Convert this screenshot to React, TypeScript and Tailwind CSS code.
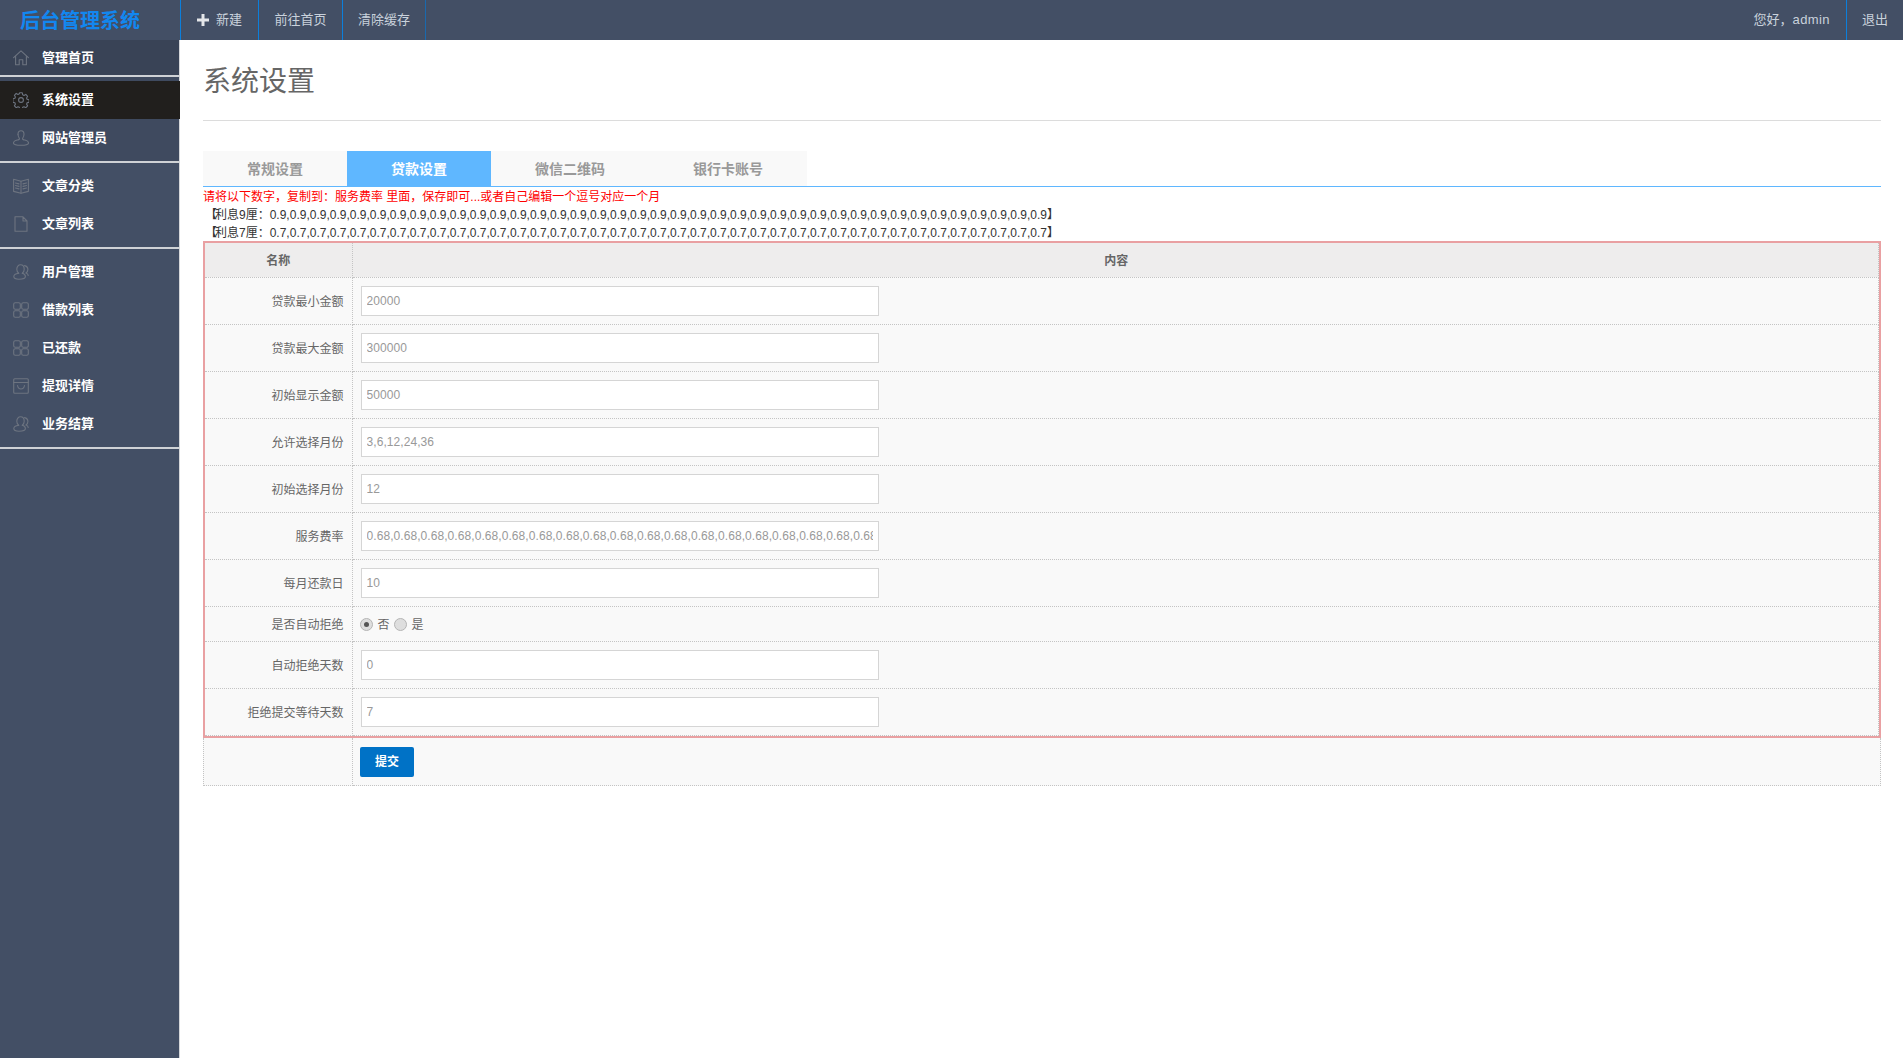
import React from "react";

const stroke = {
  fill: "none",
  stroke: "#6d7480",
  strokeWidth: 1.1,
  strokeLinejoin: "round" as const,
  strokeLinecap: "round" as const,
};

function Icon({ name }: { name: string }) {
  return (
    <svg viewBox="0 0 16 16" className="w-4 h-4 shrink-0" {...stroke}>
      {name === "home" && (
        <>
          <path d="M.6 7.6 8 .8l7.4 6.8" />
          <path d="M2.6 6.2v8.6h3.6v-5h3.6v5h3.6V6.2" />
        </>
      )}
      {name === "gear" && (
        <>
          <circle cx="8" cy="8" r="2.4" />
          <path d="M6.7.8h2.6l.4 2 1.3.6 1.8-1 1.8 1.9-1 1.7.5 1.3 2 .5v2.5l-2 .5-.5 1.3 1 1.7-1.8 1.9-1.8-1-1.3.6-.4 2H6.7l-.4-2-1.3-.6-1.8 1-1.8-1.9 1-1.7-.5-1.3-2-.5V6.8l2-.5.5-1.3-1-1.7 1.8-1.9 1.8 1 1.3-.6z" />
        </>
      )}
      {name === "user" && (
        <>
          <path d="M5 4.2C5 2 6.300.7 8 .7s3 1.300 3 3.500c0 2-.8 3.300-1.300 4.100-.3.6 0 1.200.8 1.500" />
          <path d="M5 4.200c0 2 .8 3.300 1.300 4.100.3.6 0 1.200-.8 1.500" />
          <path d="M5.500 9.800C2.500 10.400.5 11.400.5 13c0 1.500 3 2.300 7.500 2.300s7.500-.8 7.500-2.300c0-1.600-2-2.600-5-3.200" />
        </>
      )}
      {name === "book" && (
        <>
          <path d="M.6 1.200 8 3.200l7.400-2v12.200L8 15.300.6 13.400z" />
          <path d="M8 3.200v12.100M2.500 5l3.500.9M2.500 7.500l3.500.9M2.500 10l3.500.9M10 5.900l3.500-.9M10 8.400l3.500-.9M10 10.900l3.500-.9" />
        </>
      )}
      {name === "file" && <path d="M2 .8h8l4 4.200v10.200H2zM10 .8v4.200h4" />}
      {name === "users" && (
        <>
          <path d="M5.700 9.300C4.500 8.500 3.800 7 3.800 5.200 3.800 2.600 5.400.8 7.500.8s3.700 1.800 3.700 4.400c0 1.800-.7 3.300-1.900 4.100" />
          <path d="M5.700 9.300C2.800 9.700.8 10.900.8 12.600c0 1.800 2.200 2.700 5.200 2.700 3.500 0 6.400-.8 6.400-2.700 0-1.700-1.500-2.900-3.100-3.300" />
          <path d="M11.500 1.600c2 .4 3.400 1.900 3.400 4 0 1.500-.8 2.800-2 3.400 1.200.4 2.300 1.100 2.300 2.400" />
        </>
      )}
      {name === "grid" && (
        <>
          <rect x=".7" y=".7" width="6.600" height="6.600" rx="1.500" />
          <rect x="8.700" y=".7" width="6.600" height="6.600" rx="1.500" />
          <rect x=".7" y="8.700" width="6.600" height="6.600" rx="1.500" />
          <rect x="8.700" y="8.700" width="6.600" height="6.600" rx="1.500" />
        </>
      )}
      {name === "box" && (
        <>
          <rect x=".7" y=".8" width="14.600" height="14.400" rx="1" />
          <path d="M.7 4.500h14.600M4.500 7.500c.4 2.300 1.800 3.500 3.500 3.500s3.100-1.200 3.500-3.500" />
        </>
      )}
    </svg>
  );
}

function NavItem({ icon, label, active, first }: { icon: string; label: string; active?: boolean; first?: boolean }) {
  return (
    <a
      className={
        "flex items-center gap-[13px] pl-[13px] text-[13px] font-bold text-white " +
        (first ? "h-[35px] bg-[#394356] " : "h-[38px] ") +
        (active ? "bg-[#211f1d] w-[180px]" : "")
      }
    >
      <Icon name={icon} />
      {label}
    </a>
  );
}

const groups = [
  [{ icon: "home", label: "管理首页", first: true }],
  [
    { icon: "gear", label: "系统设置", active: true },
    { icon: "user", label: "网站管理员" },
  ],
  [
    { icon: "book", label: "文章分类" },
    { icon: "file", label: "文章列表" },
  ],
  [
    { icon: "users", label: "用户管理" },
    { icon: "grid", label: "借款列表" },
    { icon: "grid", label: "已还款" },
    { icon: "box", label: "提现详情" },
    { icon: "users", label: "业务结算" },
  ],
];

const tabs = ["常规设置", "贷款设置", "微信二维码", "银行卡账号"];

const rows = [
  { label: "贷款最小金额", value: "20000" },
  { label: "贷款最大金额", value: "300000" },
  { label: "初始显示金额", value: "50000" },
  { label: "允许选择月份", value: "3,6,12,24,36" },
  { label: "初始选择月份", value: "12" },
  { label: "服务费率", value: Array(40).fill("0.68").join(",") },
  { label: "每月还款日", value: "10" },
  { label: "是否自动拒绝", radio: true },
  { label: "自动拒绝天数", value: "0" },
  { label: "拒绝提交等待天数", value: "7" },
];

function Radio({ checked }: { checked?: boolean }) {
  return (
    <span className="flex items-center justify-center w-[13px] h-[13px] rounded-full border border-[#b5b5b5] bg-[#dedede]">
      {checked && <span className="w-[5px] h-[5px] rounded-full bg-[#555]" />}
    </span>
  );
}

export default function App() {
  return (
    <div className="h-screen overflow-hidden flex flex-col bg-white text-xs text-[#666] font-['Liberation_Sans','Noto_Sans_CJK_SC',sans-serif]">
      <header className="h-10 shrink-0 flex bg-[#434f65] text-[13px] text-[#c9d2dc]">
        <div className="w-[181px] border-r border-[#0b7fdc] pl-5 pt-0.5 flex items-center text-xl font-bold text-[#1287f0]">
          后台管理系统
        </div>
        <a className="w-[78px] border-r border-[#0b7fdc] flex items-center justify-center gap-[7px]">
          <svg viewBox="0 0 12 12" className="w-3 h-3 fill-[#e4e6e9]">
            <path d="M4.500 0h3v4.500H12v3H7.500V12h-3V7.500H0v-3h4.500z" />
          </svg>
          新建
        </a>
        <a className="w-[84px] border-r border-[#0b7fdc] flex items-center justify-center">前往首页</a>
        <a className="w-[83px] border-r border-[#1a69ad] flex items-center justify-center">清除缓存</a>
        <div className="ml-auto flex items-center pr-4">
          您好，<span className="tracking-[0.4px]">admin</span>
        </div>
        <a className="w-[57px] border-l border-[#0b7fdc] flex items-center pl-[15px]">退出</a>
      </header>

      <div className="flex-1 flex min-h-0">
        <aside className="w-[180px] shrink-0 bg-[#434f65] border-r border-[#d5d7da]">
          {groups.map((g, i) => (
            <div
              key={i}
              className={
                "border-b-2 border-[#cfd2d6] " + (i === 0 ? "" : i === 1 ? "py-1 bg-[#3f4a5f]" : "py-1")
              }
            >
              {g.map((item) => (
                <NavItem key={item.label} {...item} />
              ))}
            </div>
          ))}
        </aside>

        <main className="flex-1 pl-[23px] pr-[22px]">
          <div className="h-[81px] border-b border-[#dcdcdc] pt-[22px]">
            <h1 className="text-[28px] leading-[40px] font-normal text-[#666]">系统设置</h1>
          </div>

          <div className="mt-[30px] h-9 flex border-b border-[#5fb7ff]">
            {tabs.map((t) => (
              <a
                key={t}
                className={
                  "px-11 flex items-center text-sm font-bold " +
                  (t === "贷款设置" ? "bg-[#5fb7ff] text-white" : "bg-[#f9f9f9] text-[#999]")
                }
              >
                {t}
              </a>
            ))}
          </div>

          <div className="leading-[18px] h-[54px] pt-px text-[#333]">
            <div className="text-[#f00]">请将以下数字，复制到：服务费率 里面，保存即可...或者自己编辑一个逗号对应一个月</div>
            <div>
              <span className="inline-block w-3 pl-[2px]">【</span>利息9厘：{Array(39).fill("0.9").join(",")}】
            </div>
            <div>
              <span className="inline-block w-3 pl-[2px]">【</span>利息7厘：{Array(39).fill("0.7").join(",")}】
            </div>
          </div>

          <div className="border-2 border-[#e9a0a2]">
            <table className="w-full table-fixed border-collapse bg-[#f9f9f9]">
              <colgroup>
                <col className="w-[147px]" />
                <col />
              </colgroup>
              <thead>
                <tr className="h-[34px] bg-[#eeeded]">
                  <th className="border border-dotted border-[#c4c4c4] border-t-0 border-l-0 pt-0.5 font-bold">名称</th>
                  <th className="border border-dotted border-[#c4c4c4] border-t-0 pt-0.5 pl-0.5 font-bold">内容</th>
                </tr>
              </thead>
              <tbody>
                {rows.map((r) => (
                  <tr key={r.label} className={r.radio ? "h-[35px]" : "h-[47px]"}>
                    <td className="border border-dotted border-[#c4c4c4] border-l-0 text-right pr-2 pt-0.5">{r.label}</td>
                    <td className="border border-dotted border-[#c4c4c4] pl-[7px]">
                      {r.radio ? (
                        <div className="flex items-center pt-0.5">
                          <Radio checked />
                          <span className="ml-[5px] mr-1">否</span>
                          <Radio />
                          <span className="ml-[5px]">是</span>
                        </div>
                      ) : (
                        <input
                          readOnly
                          value={r.value}
                          className="block ml-px w-[518px] h-[30px] px-[5px] bg-white border border-[#d5d5d5] text-xs tracking-[0.07px] text-[#999] outline-none"
                        />
                      )}
                    </td>
                  </tr>
                ))}
              </tbody>
            </table>
          </div>

          <table className="w-full table-fixed border-collapse bg-[#f9f9f9]">
            <colgroup>
              <col className="w-[149px]" />
              <col />
            </colgroup>
            <tbody>
              <tr className="h-[48px]">
                <td className="border border-dotted border-[#c4c4c4] border-t-0" />
                <td className="border border-dotted border-[#c4c4c4] border-t-0 pl-[7px] pt-0.5">
                  <button className="block w-[54px] h-[30px] rounded-[2px] bg-[#0072c6] text-xs font-bold text-white">
                    提交
                  </button>
                </td>
              </tr>
            </tbody>
          </table>
        </main>
      </div>
    </div>
  );
}
